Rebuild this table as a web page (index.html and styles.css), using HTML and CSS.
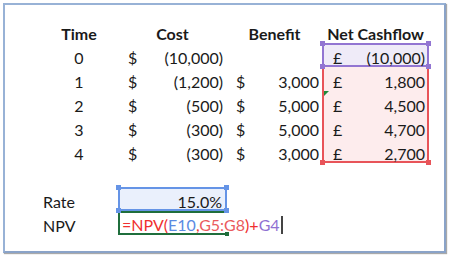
FILE: index.html
```html
<!DOCTYPE html>
<html lang="en">
<head>
    <meta charset="UTF-8">
    <meta name="viewport" content="width=device-width, initial-scale=1.0">
    <title>NPV Worksheet</title>
    <link rel="stylesheet" href="styles.css">
</head>
<body>
    <div class="frame">
        <div class="sheet">
            <!-- header row -->
            <div class="cell hd">Time</div>
            <div class="cell hd">Cost</div>
            <div class="cell hd">Benefit</div>
            <div class="cell hd">Net Cashflow</div>

            <!-- year 0 -->
            <div class="cell mid">0</div>
            <div class="cell acct col-e"><span>$</span><span>(10,000)</span></div>
            <div class="cell"></div>
            <div class="cell acct col-g ref-purple">
                <span>£</span><span>(10,000)</span>
                <i class="grip tl"></i><i class="grip tr"></i><i class="grip bl"></i><i class="grip br"></i>
            </div>

            <!-- year 1 -->
            <div class="cell mid">1</div>
            <div class="cell acct col-e"><span>$</span><span>(1,200)</span></div>
            <div class="cell acct col-f"><span>$</span><span>3,000</span></div>
            <div class="cell acct col-g ref-red"><span>£</span><span>1,800</span></div>

            <!-- year 2 -->
            <div class="cell mid">2</div>
            <div class="cell acct col-e"><span>$</span><span>(500)</span></div>
            <div class="cell acct col-f"><span>$</span><span>5,000</span></div>
            <div class="cell acct col-g ref-red">
                <span>£</span><span>4,500</span>
                <i class="flag"></i>
            </div>

            <!-- year 3 -->
            <div class="cell mid">3</div>
            <div class="cell acct col-e"><span>$</span><span>(300)</span></div>
            <div class="cell acct col-f"><span>$</span><span>5,000</span></div>
            <div class="cell acct col-g ref-red"><span>£</span><span>4,700</span></div>

            <!-- year 4 -->
            <div class="cell mid">4</div>
            <div class="cell acct col-e"><span>$</span><span>(300)</span></div>
            <div class="cell acct col-f"><span>$</span><span>3,000</span></div>
            <div class="cell acct col-g ref-red last">
                <span>£</span><span>2,700</span>
                <i class="grip bl red"></i><i class="grip br red"></i>
            </div>

            <!-- spacer row -->
            <div class="cell"></div>
            <div class="cell"></div>
            <div class="cell"></div>
            <div class="cell"></div>

            <!-- inputs -->
            <div class="cell label">Rate</div>
            <div class="cell num ref-blue">
                15.0%
                <i class="grip tl blue"></i><i class="grip tr blue"></i><i class="grip bl blue"></i><i class="grip br blue"></i>
            </div>
            <div class="cell"></div>
            <div class="cell"></div>

            <div class="cell label">NPV</div>
            <div class="cell editing">
                <span class="fx">=NPV(</span><span class="r-blue">E10</span><span class="fx">,</span><span class="r-red">G5:G8</span><span class="fx">)+</span><span class="r-purple">G4</span><span class="caret"></span>
                <i class="grip br green"></i>
            </div>
            <div class="cell"></div>
            <div class="cell"></div>
        </div>
    </div>
</body>
</html>
```

FILE: styles.css
```css
body {
    margin: 0;
    background: #fff;
    font-family: Lato, "Open Sans", sans-serif;
    font-size: 16px;
    color: #1a1a1a;
}

.frame {
    margin: 3px;
    width: 443px;
    height: 250px;
    box-sizing: border-box;
    border: 2px solid #98b2d6;
    border-right-color: #8aa3c8;
    border-bottom-color: #8aa3c8;
    box-shadow: 1px 1px 1px #a9a9a9;
    padding: 14px 0 0 35px;
}

.sheet {
    display: grid;
    grid-template-columns: 78px 109px 95px 107px;
    grid-auto-rows: 24px;
}

.cell {
    position: relative;
    box-sizing: border-box;
    height: 24px;
    padding: 5px 3px 0;
    line-height: 19px;
    white-space: nowrap;
}

.hd {
    font-weight: bold;
    text-align: center;
}

.mid {
    text-align: center;
}

.num {
    text-align: right;
}

/* accounting format: symbol on the left, amount on the right */
.acct {
    display: flex;
    justify-content: space-between;
    padding-left: 10px;
    padding-right: 4px;
}

.col-f {
    padding-left: 9px;
    padding-right: 3px;
}

.col-g {
    padding-left: 9px;
    padding-right: 2px;
}

/* range highlights shown while the formula is edited */
.ref-purple {
    background: #efebf8;
    border: 2px solid #9275d2;
    padding-top: 3px;
    z-index: 2;
}

.ref-red {
    background: #fdeced;
    border-left: 2px solid #e85459;
    border-right: 2px solid #e85459;
}

.ref-red.last {
    border-bottom: 2px solid #e85459;
}

.ref-blue {
    background: #eaf0fc;
    border: 2px solid #6594e6;
    padding-top: 3px;
    z-index: 2;
}

.editing {
    padding-top: 2px;
    padding-left: 2px;
    border: 2px solid #1f6e3c;
    border-right: none;
    overflow: visible;
    z-index: 1;
}

.grip {
    position: absolute;
    width: 5px;
    height: 5px;
    background: #9275d2;
}

.grip.tl { top: -4px; left: -4px; }
.grip.tr { top: -4px; right: -4px; }
.grip.bl { bottom: -4px; left: -4px; }
.grip.br { bottom: -4px; right: -4px; }

.grip.red { background: #e85459; }
.grip.blue { background: #6594e6; }
.grip.green {
    background: #1f6e3c;
    width: 4px;
    height: 4px;
    bottom: -3px;
    right: -2px;
}

/* error indicator in the corner of the cell */
.flag {
    position: absolute;
    top: 0;
    left: 0;
    border-top: 5px solid #1e8a3a;
    border-right: 5px solid transparent;
}

.label {
    padding-left: 3px;
}

.fx { color: #f0302f; }
.r-blue { color: #5b8be2; }
.r-red { color: #ea5a5e; }
.r-purple { color: #9071d2; }

.caret {
    display: inline-block;
    width: 2px;
    height: 18px;
    margin-left: 1px;
    background: #444;
    vertical-align: -3px;
}
```
